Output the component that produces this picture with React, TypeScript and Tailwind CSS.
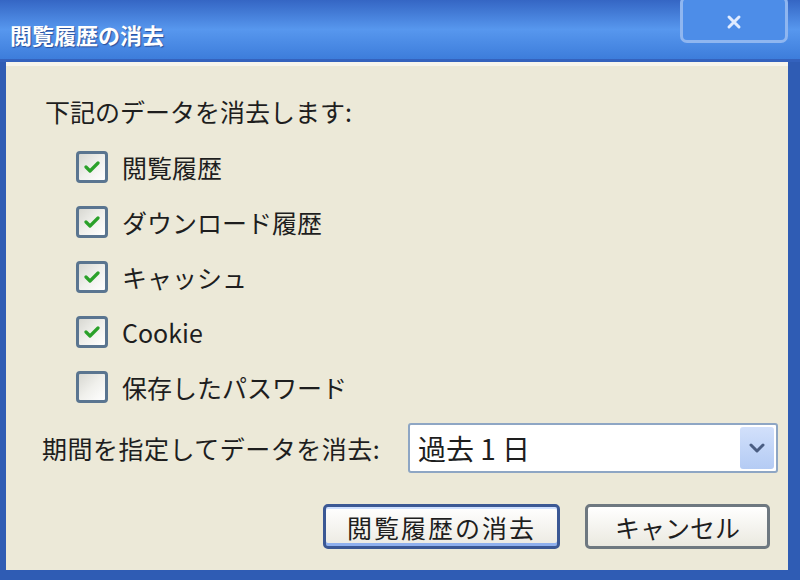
import React from 'react';

const JP = "font-['MS_UI_Gothic','Noto_Sans_CJK_JP',sans-serif]";

const ITEMS = [
  { label: '閲覧履歴', checked: true },
  { label: 'ダウンロード履歴', checked: true },
  { label: 'キャッシュ', checked: true },
  { label: 'Cookie', checked: true },
  { label: '保存したパスワード', checked: false },
];

function CheckBox({ checked }: { checked: boolean }) {
  return (
    <div className="w-[32px] h-[32px] rounded-[4px] border-[3px] border-[#5a7590] bg-linear-to-br from-[#d8d8d2] via-[#f0f0ec] to-white flex items-center justify-center">
      {checked && (
        <svg width="16" height="14" viewBox="0 0 16 14">
          <path d="M2 7 L6 11 L14 3" fill="none" stroke="#2aa12a" strokeWidth="3.2" strokeLinecap="round" strokeLinejoin="round" />
        </svg>
      )}
    </div>
  );
}

export default function App() {
  return (
    <div className={`w-[800px] h-[580px] flex flex-col bg-[#2f5cb4] overflow-hidden text-[#1e1e1e] ${JP}`}>
      {/* タイトルバー */}
      <div className="h-[62px] flex items-start bg-linear-to-b from-[#3566c4] via-[#5797ee] to-[#3d7ddb] border-b-[3px] border-[#3462bd]">
        <div className="ml-[10px] mt-[19px] text-[22px] leading-[30px] font-bold text-white [text-shadow:1px_1px_1px_#2a4f9a]">
          閲覧履歴の消去
        </div>
        <div className="ml-auto mr-[12px] -mt-[4px] w-[108px] h-[47px] rounded-[7px] border-[3px] border-[#8fb6f0] bg-[#4d8de8] flex items-center justify-center pt-[4px]">
          <svg width="18" height="18" viewBox="0 0 18 18">
            <path d="M4 4 L14 14 M14 4 L4 14" stroke="#e0ebff" strokeWidth="3" strokeLinecap="round" />
          </svg>
        </div>
      </div>

      {/* 本文 */}
      <div className="flex-1 flex flex-col bg-[#ece9d8] border-t-[4px] border-t-[#f7f5ec] ml-[6px] mr-[12px] mb-[10px] pt-[30px] pl-[39px] pr-[10px]">
        <div className="h-[30px] leading-[30px] text-[25px]">下記のデータを消去します:</div>

        <div className="mt-[13px] flex flex-col pl-[31px]">
          {ITEMS.map((item) => (
            <div key={item.label} className="h-[55px] flex items-center gap-[14px]">
              <CheckBox checked={item.checked} />
              <span className="text-[25px] leading-[30px]">{item.label}</span>
            </div>
          ))}
        </div>

        <div className="mt-[9px] h-[50px] flex items-center -ml-[3px]">
          <span className="text-[25px] leading-[30px] tracking-[0.5px]">期間を指定してデータを消去:</span>
          <div className="ml-auto w-[370px] h-[50px] rounded-[3px] border-[2px] border-[#8ea6c4] bg-white flex items-center pl-[8px] pr-[2px]">
            <span className="text-[28px] leading-[30px] whitespace-pre">過去 1 日</span>
            <div className="ml-auto w-[34px] h-[42px] rounded-[3px] bg-linear-to-b from-[#d2e0fb] to-[#b4cbf4] flex items-center justify-center">
              <svg width="16" height="12" viewBox="0 0 16 12">
                <path d="M2 3 L8 9 L14 3" fill="none" stroke="#4a5d82" strokeWidth="3" strokeLinecap="round" strokeLinejoin="round" />
              </svg>
            </div>
          </div>
        </div>

        <div className="mt-[31px] flex justify-end gap-[25px] pr-[8px]">
          <button className="w-[237px] h-[45px] rounded-[5px] border-[3px] border-[#3b5894] bg-linear-to-b from-white to-[#eceae2] shadow-[inset_0_-3px_0_#8fb0ee,inset_0_2px_0_#cfe0ff] text-[25px] leading-[30px] tracking-[2px] text-[#1e1e1e]">
            閲覧履歴の消去
          </button>
          <button className="w-[185px] h-[45px] rounded-[5px] border-[3px] border-[#6e7880] bg-linear-to-b from-white to-[#ebe9e0] text-[25px] leading-[30px] text-[#1e1e1e]">
            キャンセル
          </button>
        </div>
      </div>
    </div>
  );
}
